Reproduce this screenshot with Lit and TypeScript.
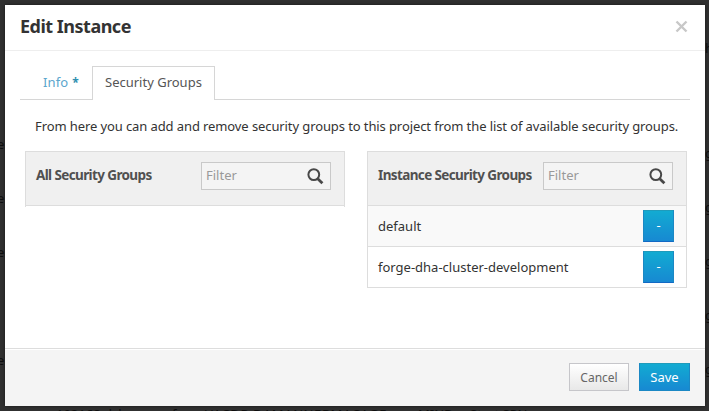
import { LitElement, html, css } from "lit";
import { customElement, property } from "lit/decorators.js";

@customElement("group-panel")
class GroupPanel extends LitElement {
  @property() heading = "";
  @property({ attribute: false }) groups: string[] = [];

  static styles = css`
    :host { display: block; width: 320px; box-sizing: border-box; }
    .head {
      box-sizing: border-box; height: 55px; display: flex; justify-content: space-between;
      padding: 10px 13px 0 10px; background: #f0f0f0; border: 1px solid #dddddd;
    }
    .name {
      font: bold 13.5px/26px "Noto Sans", sans-serif; letter-spacing: -0.62px;
      color: #505050; white-space: nowrap;
    }
    .filter {
      box-sizing: border-box; width: 130px; height: 28px; display: flex; align-items: center;
      justify-content: space-between; padding: 0 6px 0 4px; border: 1px solid #c9c9c9;
      background: #f4f4f4; color: #999999; font-size: 13px;
    }
    .filter span { line-height: 24px; height: 26px; }
    .row {
      box-sizing: border-box; height: 41px; display: flex; align-items: center;
      justify-content: space-between; padding: 0 12px 0 10px;
      border: 1px solid #dddddd; border-top: 0; background: #ffffff; color: #333333;
    }
    .row:nth-child(even) { background: #f9f9f9; }
    .minus {
      box-sizing: border-box; width: 31px; height: 32px; border: 1px solid #1b88c4;
      border-top-color: #1f9bbb; border-bottom-color: #1269c4;
      background: linear-gradient(#12abd2, #1789d2); color: #ffffff;
      font-size: 13px; line-height: 28px; text-align: center;
    }
    .stub { height: 1px; border: solid #dddddd; border-width: 0 1px; }
  `;

  render() {
    return html`
      <div class="head">
        <span class="name">${this.heading}</span>
        <div class="filter">
          <span>Filter</span>
          <svg width="17" height="17" viewBox="0 0 17 17" fill="none" stroke="#484848">
            <circle cx="6.8" cy="6.6" r="5.4" stroke-width="2" />
            <path d="M10.7 10.7 L15.4 15.2" stroke-width="2.8" />
          </svg>
        </div>
      </div>
      ${this.groups.length
        ? this.groups.map((g) => html`<div class="row"><span>${g}</span><div class="minus">-</div></div>`)
        : html`<div class="stub"></div>`}
    `;
  }
}

@customElement("app-root")
class AppRoot extends LitElement {
  static styles = css`
    :host {
      display: block; position: relative; width: 709px; height: 411px; overflow: hidden;
      box-sizing: border-box; padding: 5px 4px 5px 5px; background: #303030;
      font: 13px/20px "Noto Sans", sans-serif; color: #333333;
    }
    .behind { position: absolute; color: #0e0e0e; white-space: pre; line-height: 16px; }
    .modal {
      position: relative; width: 700px; height: 401px; display: flex; flex-direction: column;
      background: #ffffff; box-shadow: 0 0 3px rgba(0, 0, 0, 0.5);
    }
    .header {
      box-sizing: border-box; height: 46px; flex: none; display: flex; justify-content: space-between;
      align-items: center; padding: 0 17px 0 15px; border-bottom: 1px solid #eeeeee;
    }
    .header svg { margin-bottom: 3px; }
    .title { font-size: 18px; font-weight: bold; letter-spacing: -0.5px; line-height: 42px; height: 45px; }
    .content { flex: 1; padding: 15px 15px 0; }
    .tabs { display: flex; height: 34px; box-sizing: border-box; border-bottom: 1px solid #d6d6d6; }
    .tab { box-sizing: border-box; height: 34px; line-height: 32px; white-space: nowrap; }
    .info { width: 72px; padding-left: 23px; color: #5ba6cd; letter-spacing: 0.1px; }
    .star { color: #2f8fb0; font-weight: bold; font-size: 12px; margin-left: 4px; }
    .active {
      width: 123px; padding-left: 12px; border: 1px solid #d6d6d6; border-bottom: 0;
      background: #ffffff; color: #555555; line-height: 30px;
    }
    .help { margin: 16px 0 15px 15px; white-space: nowrap; letter-spacing: -0.1px; }
    .panels { display: flex; gap: 22px; margin-left: 5px; }
    .footer {
      box-sizing: border-box; height: 58px; flex: none; display: flex; justify-content: flex-end; gap: 10px;
      padding: 14px 15px 0; border-top: 1px solid #dddddd; background: #f4f4f4;
      box-shadow: inset 0 1px #ffffff;
    }
    .button { box-sizing: border-box; height: 28px; line-height: 26px; text-align: center; }
    .cancel {
      width: 60px; border: 1px solid #c6c6ca; color: #666666;
      background: linear-gradient(#ffffff, #e8e8e8); font-size: 12px; line-height: 28px;
    }
    .save {
      width: 51px; border: 1px solid #1b88c4; border-top-color: #1f9bbb; color: #ffffff;
      background: linear-gradient(#12abd2, #1789d2);
    }
    .e1 { left: -3px; top: 136px; } .e2 { left: -3px; top: 190px; }
    .e3 { left: -3px; top: 244px; } .e4 { left: -3px; top: 352px; }
    .r0 { left: 705px; top: 40px; } .r1 { left: 705px; top: 145px; }
    .r2 { left: 705px; top: 199px; } .r3 { left: 705px; top: 253px; }
    .r4 { left: 705px; top: 307px; } .r5 { left: 705px; top: 361px; }
    .b { top: 406px; }
    .b1 { left: 56px; } .b2 { left: 172px; } .b3 { left: 205px; letter-spacing: 0.6px; }
    .b4 { left: 418px; } .b5 { left: 470px; }
  `;

  render() {
    return html`
      ${[1, 2, 3, 4].map((n) => html`<span class="behind e${n}">e</span>`)}
      <span class="behind r0">h</span>
      ${[1, 2, 3, 4, 5].map((n) => html`<span class="behind r${n}">g</span>`)}
      <span class="behind b b1">192168 dsh</span>
      <span class="behind b b2">f</span>
      <span class="behind b b3">VACDR DAMANNERMACAGE</span>
      <span class="behind b b4">MIND</span>
      <span class="behind b b5">Start SPN</span>
      <div class="modal">
        <div class="header">
          <span class="title">Edit Instance</span>
          <svg width="13" height="13" viewBox="0 0 13 13" fill="none" stroke="#c8c8c8" stroke-width="2.4">
            <path d="M1.5 1.5 L11.5 11.5 M11.5 1.5 L1.5 11.5" />
          </svg>
        </div>
        <div class="content">
          <div class="tabs">
            <div class="tab info">Info<span class="star">*</span></div>
            <div class="tab active">Security Groups</div>
          </div>
          <div class="help">From here you can add and remove security groups to this project from the list of available security groups.</div>
          <div class="panels">
            <group-panel heading="All Security Groups"></group-panel>
            <group-panel heading="Instance Security Groups" .groups=${["default", "forge-dha-cluster-development"]}></group-panel>
          </div>
        </div>
        <div class="footer">
          <div class="button cancel">Cancel</div>
          <div class="button save">Save</div>
        </div>
      </div>
    `;
  }
}
